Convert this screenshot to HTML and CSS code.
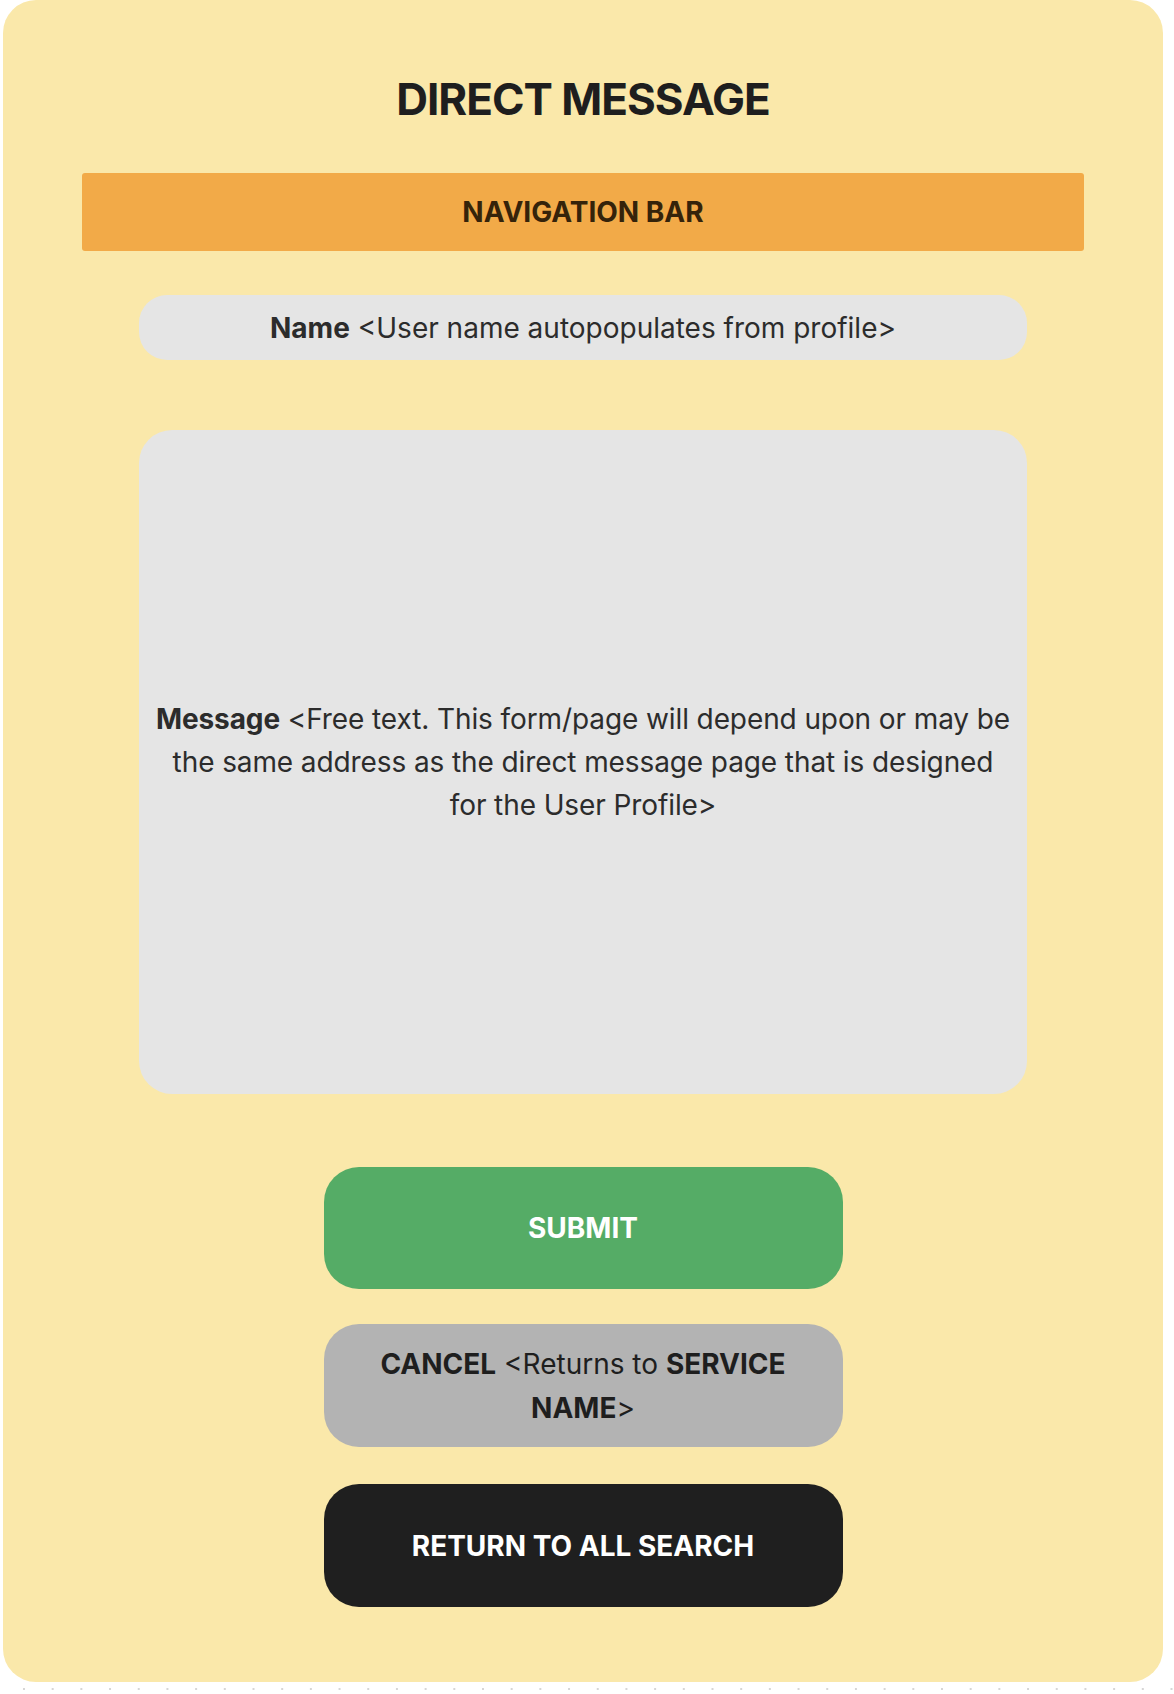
FILE: index.html
```html
<!DOCTYPE html>
<html lang="en">
<head>
<meta charset="utf-8">
<title>Direct Message</title>
<link rel="stylesheet" href="styles.css">
</head>
<body>
  <main class="card">
    <h1 class="title">DIRECT MESSAGE</h1>
    <nav class="navbar">NAVIGATION BAR</nav>
    <div class="field field-name"><p><b>Name</b> &lt;User name autopopulates from profile&gt;</p></div>
    <div class="field field-message"><p><b>Message</b> &lt;Free text. This form/page will depend upon or may be the same address as the direct message page that is designed for the User Profile&gt;</p></div>
    <div class="actions">
      <button class="btn btn-submit">SUBMIT</button>
      <button class="btn btn-cancel"><b>CANCEL</b> &lt;Returns to <b>SERVICE NAME</b>&gt;</button>
      <button class="btn btn-return">RETURN TO ALL SEARCH</button>
    </div>
  </main>
  <div class="dots"></div>
</body>
</html>
```

FILE: styles.css
```css
html, body {
  margin: 0;
  padding: 0;
  background: #ffffff;
}

body {
  font-family: "Inter", "Noto Sans", "Liberation Sans", sans-serif;
  color: #2c2c2c;
}

.card {
  box-sizing: border-box;
  width: 1160px;
  height: 1682px;
  margin-left: 3px;
  background: #fae8aa;
  border-radius: 33px;
  display: flex;
  flex-direction: column;
  align-items: center;
  padding-top: 72px;
}

.title {
  margin: 0;
  font-size: 44px;
  line-height: 54px;
  font-weight: 700;
  color: #1e1e1e;
  letter-spacing: -1px;
}

.navbar {
  box-sizing: border-box;
  margin-top: 47px;
  width: 1002px;
  height: 78px;
  background: #f2aa48;
  border-radius: 3px;
  display: flex;
  align-items: center;
  justify-content: center;
  font-size: 28px;
  font-weight: 700;
  color: #35230a;
}

.field {
  box-sizing: border-box;
  width: 888px;
  background: #e5e5e5;
  display: flex;
  align-items: center;
  justify-content: center;
  text-align: center;
  font-size: 28px;
  color: #2c2c2c;
}

.field p {
  margin: 0;
}

.field b {
  font-weight: 700;
}

.field-name {
  margin-top: 44px;
  height: 65px;
  border-radius: 28px;
}

.field-message {
  margin-top: 70px;
  height: 664px;
  border-radius: 33px;
  padding: 0 12px;
}

.field-message p {
  line-height: 43px;
  letter-spacing: -0.1px;
}

.actions {
  display: flex;
  flex-direction: column;
  align-items: center;
  margin-top: 73px;
}

.btn {
  box-sizing: border-box;
  width: 519px;
  height: 123px;
  border: none;
  border-radius: 35px;
  font-family: inherit;
  font-size: 28px;
  line-height: 44px;
  padding: 0 50px;
  text-align: center;
  cursor: pointer;
}

.btn-submit {
  height: 122px;
  background: #55ac66;
  color: #ffffff;
  font-weight: 700;
}

.btn-cancel {
  margin-top: 35px;
  background: #b3b3b3;
  color: #1e1e1e;
  font-weight: 400;
}

.btn-cancel b {
  font-weight: 700;
}

.btn-return {
  margin-top: 37px;
  background: #1f1f1f;
  color: #ffffff;
  font-weight: 700;
}

.dots {
  margin-top: 6px;
  height: 2px;
  background-image: linear-gradient(to right, #d6d6d6 0 2px, transparent 2px);
  background-size: 28.7px 2px;
  background-position: 23px 0;
  background-repeat: repeat-x;
}
```
